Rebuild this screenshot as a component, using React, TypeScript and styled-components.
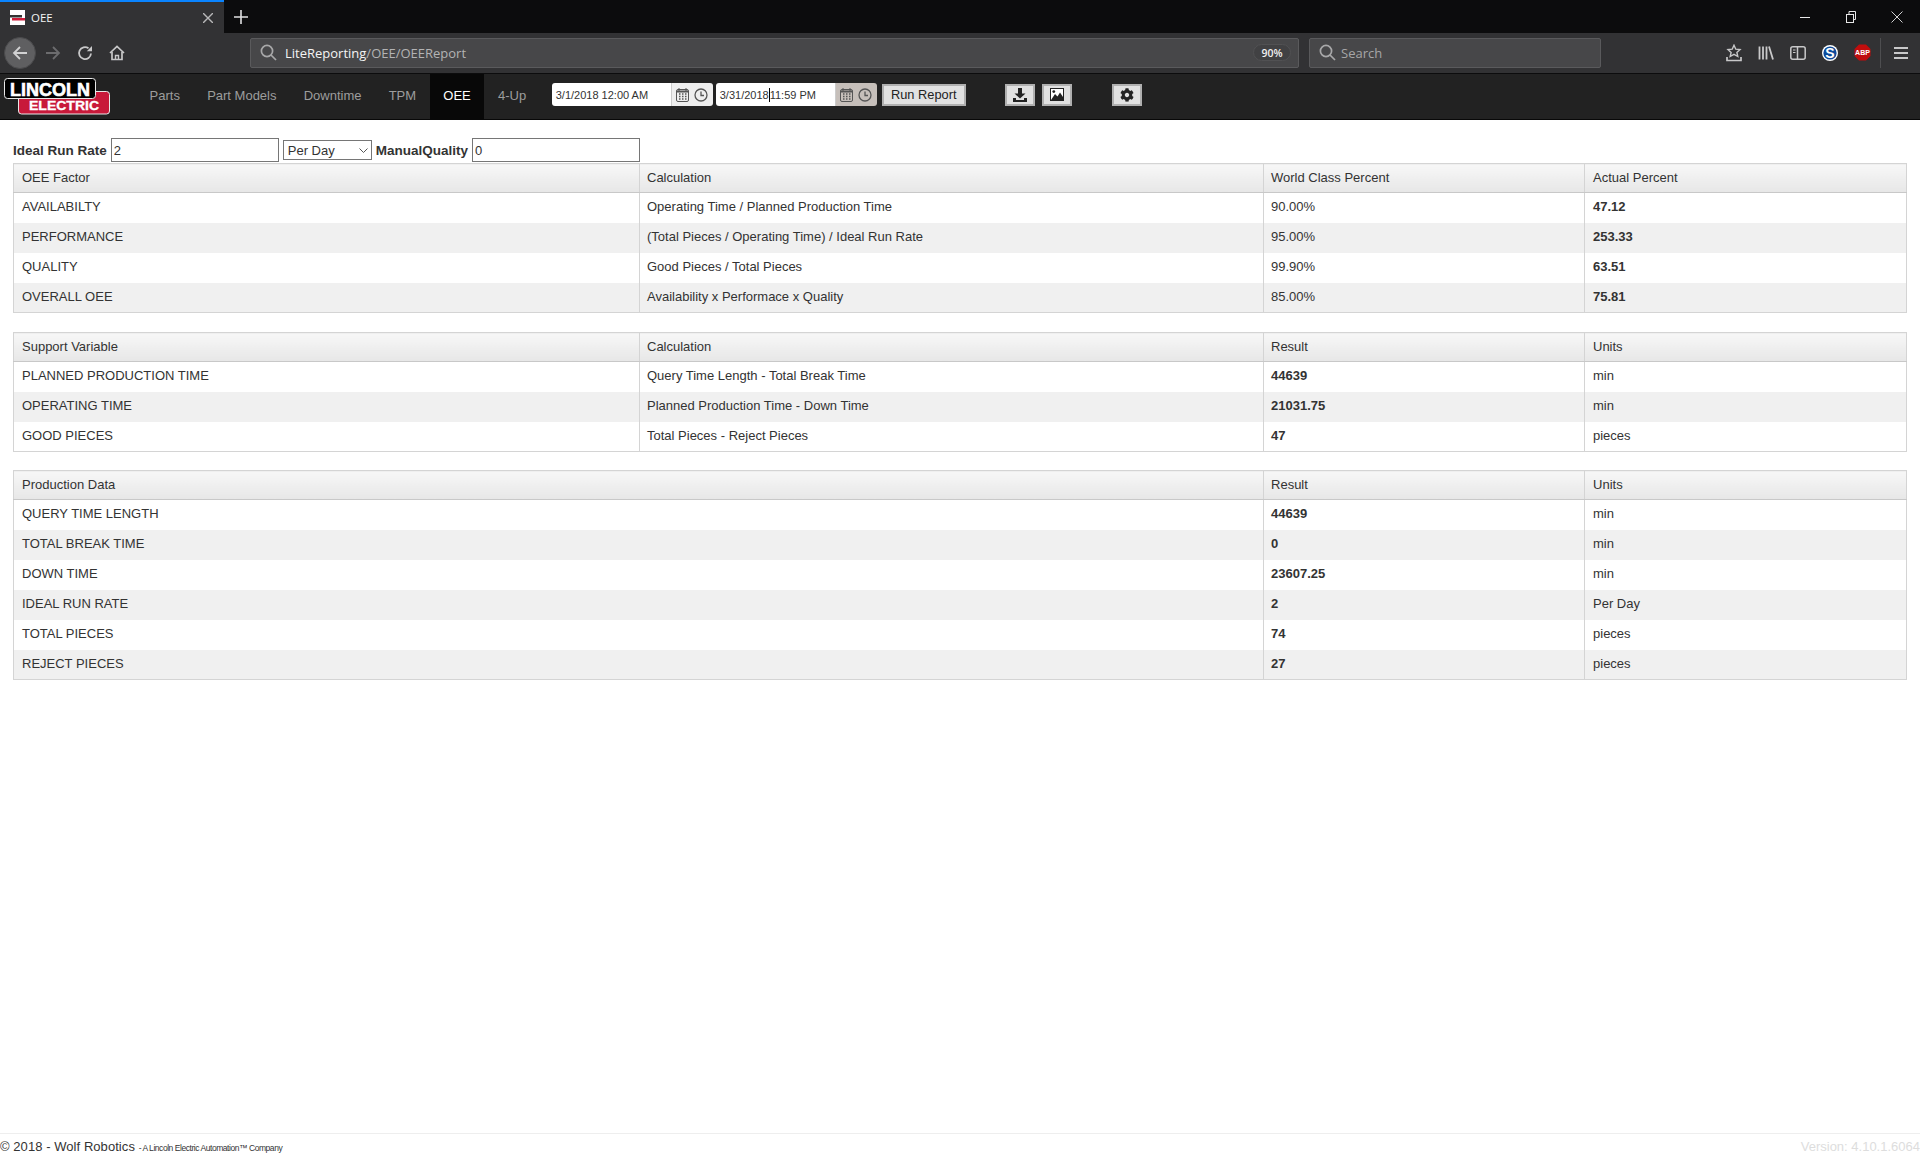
import React from "react";
import styled, { createGlobalStyle } from "styled-components";
import { FaCog } from "react-icons/fa";

const GlobalStyle = createGlobalStyle`
  html, body {
    margin: 0;
    padding: 0;
    background: #fff;
  }
  * {
    box-sizing: border-box;
  }
`;

interface Cell {
  text: string;
  bold?: boolean;
  span?: number;
}

const TABLE_COLS = [626, 624, 321, 322];

const factorRows: Cell[][] = [
  [{ text: "AVAILABILTY" }, { text: "Operating Time / Planned Production Time" }, { text: "90.00%" }, { text: "47.12", bold: true }],
  [{ text: "PERFORMANCE" }, { text: "(Total Pieces / Operating Time) / Ideal Run Rate" }, { text: "95.00%" }, { text: "253.33", bold: true }],
  [{ text: "QUALITY" }, { text: "Good Pieces / Total Pieces" }, { text: "99.90%" }, { text: "63.51", bold: true }],
  [{ text: "OVERALL OEE" }, { text: "Availability x Performace x Quality" }, { text: "85.00%" }, { text: "75.81", bold: true }],
];

const supportRows: Cell[][] = [
  [{ text: "PLANNED PRODUCTION TIME" }, { text: "Query Time Length - Total Break Time" }, { text: "44639", bold: true }, { text: "min" }],
  [{ text: "OPERATING TIME" }, { text: "Planned Production Time - Down Time" }, { text: "21031.75", bold: true }, { text: "min" }],
  [{ text: "GOOD PIECES" }, { text: "Total Pieces - Reject Pieces" }, { text: "47", bold: true }, { text: "pieces" }],
];

const productionRows: Cell[][] = [
  [{ text: "QUERY TIME LENGTH", span: 2 }, { text: "44639", bold: true }, { text: "min" }],
  [{ text: "TOTAL BREAK TIME", span: 2 }, { text: "0", bold: true }, { text: "min" }],
  [{ text: "DOWN TIME", span: 2 }, { text: "23607.25", bold: true }, { text: "min" }],
  [{ text: "IDEAL RUN RATE", span: 2 }, { text: "2", bold: true }, { text: "Per Day" }],
  [{ text: "TOTAL PIECES", span: 2 }, { text: "74", bold: true }, { text: "pieces" }],
  [{ text: "REJECT PIECES", span: 2 }, { text: "27", bold: true }, { text: "pieces" }],
];

const navItems = ["Parts", "Part Models", "Downtime", "TPM", "OEE", "4-Up"];

const ReportTable = ({ head, rows }: { head: Cell[]; rows: Cell[][] }) => (
  <Table>
    <colgroup>
      {TABLE_COLS.map((w, i) => (
        <Col key={i} $w={w} />
      ))}
    </colgroup>
    <thead>
      <tr>
        {head.map((h) => (
          <Th key={h.text} colSpan={h.span}>
            {h.text}
          </Th>
        ))}
      </tr>
    </thead>
    <tbody>
      {rows.map((row, i) => (
        <Tr key={i}>
          {row.map((c) => (
            <Td key={c.text} colSpan={c.span} $bold={c.bold}>
              {c.text}
            </Td>
          ))}
        </Tr>
      ))}
    </tbody>
  </Table>
);

const CalendarIcon = () => (
  <svg width="13" height="14" viewBox="0 0 13 14" fill="none" stroke="#555" strokeWidth="1">
    <rect x="0.5" y="1.5" width="12" height="12" rx="1.5" />
    <path d="M3 0v3M10 0v3" />
    <path d="M1 3.5h11" strokeWidth="2" />
    <path d="M3 6h1.5M6 6h1.5M9 6h1.5M3 8.5h1.5M6 8.5h1.5M9 8.5h1.5M3 11h1.5M6 11h1.5M9 11h1.5" strokeWidth="1.4" />
  </svg>
);

const ClockIcon = () => (
  <svg width="14" height="14" viewBox="0 0 14 14" fill="none" stroke="#555" strokeWidth="1.3">
    <circle cx="7" cy="7" r="6" />
    <path d="M7 3.5V7.5H10" />
  </svg>
);

const SearchGlyph = () => (
  <svg width="17" height="17" viewBox="0 0 17 17" fill="none" stroke="#a8a8a9" strokeWidth="1.7" style={{ flexShrink: 0 }}>
    <circle cx="7" cy="7" r="5.6" />
    <path d="M11 11L16 16" />
  </svg>
);

const App = () => {
  return (
    <Page>
      <GlobalStyle />

      <TabStrip>
        <ActiveTab>
          <Favicon>
            <svg width="15" height="15" viewBox="0 0 15 15">
              <rect width="15" height="15" fill="#fff" />
              <rect x="0" y="5" width="12" height="2.5" fill="#333" />
              <rect x="2" y="8" width="13" height="2.5" fill="#d01c3a" />
            </svg>
          </Favicon>
          <TabTitle>OEE</TabTitle>
          <TabClose>
            <svg width="10" height="10" viewBox="0 0 10 10" stroke="#b8b8b9" strokeWidth="1.4">
              <path d="M0 0L10 10M10 0L0 10" />
            </svg>
          </TabClose>
        </ActiveTab>
        <NewTab>
          <svg width="14" height="14" viewBox="0 0 14 14" stroke="#e0e0e1" strokeWidth="1.6">
            <path d="M7 0V14M0 7H14" />
          </svg>
        </NewTab>
        <WindowControls>
          <WindowButton>
            <svg width="10" height="10" viewBox="0 0 10 10" stroke="#e8e8e8">
              <path d="M0 5.5H10" />
            </svg>
          </WindowButton>
          <WindowButton>
            <svg width="10" height="12" viewBox="0 0 10 12" fill="none" stroke="#e8e8e8">
              <rect x="0.5" y="3.5" width="7" height="8" />
              <path d="M3 3.5V0.5H9.5V8.5H7.5" />
            </svg>
          </WindowButton>
          <WindowButton>
            <svg width="12" height="12" viewBox="0 0 12 12" stroke="#e8e8e8" strokeWidth="0.9">
              <path d="M0.5 0.5L11.5 11.5M11.5 0.5L0.5 11.5" />
            </svg>
          </WindowButton>
        </WindowControls>
      </TabStrip>

      <BrowserBar>
        <BackButton>
          <svg width="16" height="16" viewBox="0 0 16 16" fill="none" stroke="#d2d2d3" strokeWidth="1.8">
            <path d="M15 8H2M8 2L2 8L8 14" />
          </svg>
        </BackButton>
        <BarButton>
          <svg width="16" height="16" viewBox="0 0 16 16" fill="none" stroke="#6c6c6e" strokeWidth="1.8">
            <path d="M1 8H14M8 2L14 8L8 14" />
          </svg>
        </BarButton>
        <BarButton>
          <svg width="16" height="16" viewBox="0 0 16 16" fill="none" stroke="#c8c8c9" strokeWidth="1.8">
            <path d="M14 8.5A6 6 0 1 1 11.5 3.2" />
            <path d="M15 1V6.2H9.8Z" fill="#c8c8c9" stroke="none" />
          </svg>
        </BarButton>
        <BarButton>
          <svg width="16" height="16" viewBox="0 0 16 16" fill="none" stroke="#c8c8c9" strokeWidth="1.7">
            <path d="M1 8L8 1.5L15 8" />
            <path d="M3 7V14.5H13V7" />
            <path d="M6.5 14.5V10.5H9.5V14.5" strokeWidth="1.4" />
          </svg>
        </BarButton>

        <UrlBar>
          <SearchGlyph />
          <UrlText>
            <UrlHost>LiteReporting</UrlHost>/OEE/OEEReport
          </UrlText>
          <ZoomPill>90%</ZoomPill>
        </UrlBar>

        <SearchBar>
          <SearchGlyph />
          <SearchText>Search</SearchText>
        </SearchBar>

        <BarIcons>
          <BarIconSlot>
            <svg width="16" height="18" viewBox="0 0 16 18" fill="none" stroke="#c8c8c9" strokeWidth="1.4">
              <path d="M8 1.2L9.8 5.2L14 5.6L10.9 8.4L11.8 12.5L8 10.4L4.2 12.5L5.1 8.4L2 5.6L6.2 5.2Z" />
              <path d="M1 13V16.5H15V13" strokeWidth="1.7" />
            </svg>
          </BarIconSlot>
          <BarIconSlot>
            <svg width="16" height="16" viewBox="0 0 16 16" fill="none" stroke="#c8c8c9" strokeWidth="1.8">
              <path d="M1.5 1.5V14.5M5 1.5V14.5M8.5 1.5V14.5M11 1.5L15 14.5" />
            </svg>
          </BarIconSlot>
          <BarIconSlot>
            <svg width="16" height="14" viewBox="0 0 16 14" fill="none" stroke="#c8c8c9" strokeWidth="1.5">
              <rect x="0.8" y="0.8" width="14.4" height="12.4" rx="2" />
              <path d="M7.5 1V13" />
              <path d="M3 4H5.5M3 6.5H5.5" strokeWidth="1" />
            </svg>
          </BarIconSlot>
          <BarIconSlot>
            <svg width="16" height="16" viewBox="0 0 16 16">
              <circle cx="8" cy="8" r="8" fill="#fff" />
              <circle cx="8" cy="8" r="6.6" fill="#0c4a9b" />
              <SyncLetter x="8" y="12.8">S</SyncLetter>
            </svg>
          </BarIconSlot>
          <BarIconSlot>
            <svg width="17" height="17" viewBox="0 0 17 17">
              <path d="M5 0.5H12L16.5 5V12L12 16.5H5L0.5 12V5Z" fill="#c00d0d" />
              <AbpLetters x="8.5" y="11.2">ABP</AbpLetters>
            </svg>
          </BarIconSlot>
        </BarIcons>
        <BarDivider />
        <MenuButton>
          <svg width="14" height="12" viewBox="0 0 14 12" stroke="#c8c8c9" strokeWidth="2">
            <path d="M0 1H14M0 6H14M0 11H14" />
          </svg>
        </MenuButton>
      </BrowserBar>

      <Navbar>
        <Logo>
          <svg width="106" height="37" viewBox="0 0 106 37">
            <rect x="14.5" y="13.5" width="91" height="22.5" rx="3" fill="#c8193a" stroke="#e8e8e8" />
            <rect x="0.5" y="0.5" width="91" height="20" rx="3" fill="#000" stroke="#e8e8e8" />
            <LogoWord x="6" y="17.5" fontSize="18" textLength="80" lengthAdjust="spacingAndGlyphs" $stroke={0.6}>
              LINCOLN
            </LogoWord>
            <LogoWord x="25" y="32" fontSize="12.5" textLength="70" lengthAdjust="spacingAndGlyphs" $stroke={0.3}>
              ELECTRIC
            </LogoWord>
          </svg>
        </Logo>

        <NavList>
          {navItems.map((item) => (
            <NavItem key={item} $active={item === "OEE"}>
              {item}
            </NavItem>
          ))}
        </NavList>

        <DateGroup>
          <DateBox>
            <DateField>3/1/2018 12:00 AM</DateField>
            <DateAddon>
              <CalendarIcon />
              <ClockIcon />
            </DateAddon>
          </DateBox>
          <DateBox>
            <DateField>
              3/31/2018
              <Caret />
              {" "}11:59 PM
            </DateField>
            <DateAddon $focused>
              <CalendarIcon />
              <ClockIcon />
            </DateAddon>
          </DateBox>
        </DateGroup>

        <RunButton>Run Report</RunButton>

        <IconButton $left={39}>
          <svg width="14" height="14" viewBox="0 0 14 14" fill="#222">
            <path d="M5 0H9V5.5H12.5L7 10.5L1.5 5.5H5Z" />
            <path d="M0 10H3V12H11V10H14V14H0Z" />
          </svg>
        </IconButton>
        <IconButton $left={7}>
          <svg width="14" height="13" viewBox="0 0 14 13">
            <rect x="0.5" y="0.5" width="13" height="12" fill="#fff" stroke="#222" />
            <path d="M1 12L5 6L7.5 8.5L10 4.5L13 9V12Z" fill="#222" />
            <circle cx="3.8" cy="3.6" r="1.4" fill="#222" />
          </svg>
        </IconButton>
        <IconButton $left={40}>
          <FaCog size={14} color="#222" />
        </IconButton>
      </Navbar>

      <Main>
        <ParamRow>
          <ParamLabel>Ideal Run Rate</ParamLabel>
          <ParamInput defaultValue="2" />
          <SelectWrap>
            <ParamSelect defaultValue="Per Day">
              <option>Per Day</option>
              <option>Per Hour</option>
            </ParamSelect>
            <SelectArrow width="9" height="5" viewBox="0 0 9 5" fill="none" stroke="#555">
              <path d="M0.5 0.5L4.5 4.5L8.5 0.5" />
            </SelectArrow>
          </SelectWrap>
          <ParamLabel>ManualQuality</ParamLabel>
          <ParamInput defaultValue="0" />
        </ParamRow>

        <ReportTable
          head={[{ text: "OEE Factor" }, { text: "Calculation" }, { text: "World Class Percent" }, { text: "Actual Percent" }]}
          rows={factorRows}
        />
        <ReportTable
          head={[{ text: "Support Variable" }, { text: "Calculation" }, { text: "Result" }, { text: "Units" }]}
          rows={supportRows}
        />
        <ReportTable
          head={[{ text: "Production Data", span: 2 }, { text: "Result" }, { text: "Units" }]}
          rows={productionRows}
        />
      </Main>

      <Footer>
        <Copyright>
          © 2018 - Wolf Robotics <CopySmall>- A Lincoln Electric Automation™ Company</CopySmall>
        </Copyright>
        <Version>Version: 4.10.1.6064</Version>
      </Footer>
    </Page>
  );
};

const Page = styled.div`
  display: flex;
  flex-direction: column;
  height: 100vh;
  font-family: "Liberation Sans", Arial, sans-serif;
  color: #333;
`;

const TabStrip = styled.div`
  display: flex;
  align-items: stretch;
  height: 33px;
  background: #0c0c0d;
  flex-shrink: 0;
`;

const ActiveTab = styled.div`
  display: flex;
  align-items: center;
  width: 224px;
  padding: 0 11px 0 10px;
  background: #323234;
  border-top: 2px solid #0a84ff;
`;

const Favicon = styled.div`
  display: flex;
  width: 15px;
  height: 15px;
`;

const TabTitle = styled.span`
  margin-left: 6px;
  font-family: "Open Sans", sans-serif;
  font-size: 11.5px;
  color: #f5f5f5;
`;

const TabClose = styled.span`
  display: flex;
  margin-left: auto;
`;

const NewTab = styled.div`
  display: flex;
  align-items: center;
  justify-content: center;
  width: 34px;
`;

const WindowControls = styled.div`
  display: flex;
  margin-left: auto;
`;

const WindowButton = styled.div`
  display: flex;
  align-items: center;
  justify-content: center;
  width: 46px;
`;

const BrowserBar = styled.div`
  display: flex;
  align-items: center;
  height: 41px;
  padding-left: 4px;
  padding-bottom: 1px;
  background: #323234;
  border-bottom: 1px solid #0c0c0d;
  flex-shrink: 0;
`;

const BackButton = styled.div`
  display: flex;
  align-items: center;
  justify-content: center;
  width: 32px;
  height: 32px;
  margin-right: 1px;
  border-radius: 50%;
  background: #5f5f61;
  border: 1px solid #4a4a4c;
`;

const BarButton = styled.div`
  display: flex;
  align-items: center;
  justify-content: center;
  width: 32px;
  height: 32px;
`;

const UrlBar = styled.div`
  display: flex;
  align-items: center;
  width: 1049px;
  height: 30px;
  margin-left: 117px;
  padding: 0 7px 0 9px;
  background: #474749;
  border: 1px solid #5a5a5c;
  border-radius: 2px;
`;

const SearchBar = styled(UrlBar)`
  width: 292px;
  margin-left: 10px;
`;

const UrlText = styled.span`
  margin-left: 8px;
  padding-top: 1px;
  font-family: "Open Sans", sans-serif;
  font-size: 13px;
  color: #b3b3b4;
`;

const UrlHost = styled.span`
  color: #f4f4f4;
`;

const ZoomPill = styled.span`
  display: flex;
  align-items: center;
  justify-content: center;
  width: 38px;
  height: 17px;
  margin-left: auto;
  border-radius: 9px;
  background: #414143;
  border: 1px solid #515153;
  font-family: "Open Sans", sans-serif;
  font-size: 10.5px;
  font-weight: 600;
  color: #f0f0f0;
`;

const SearchText = styled.span`
  margin-left: 5px;
  padding-top: 1px;
  font-family: "Open Sans", sans-serif;
  font-size: 13px;
  color: #a6a6a7;
`;

const BarIcons = styled.div`
  display: flex;
  margin-left: 117px;
`;

const BarIconSlot = styled.div`
  display: flex;
  align-items: center;
  justify-content: center;
  width: 32px;
  height: 32px;
`;

const SyncLetter = styled.text`
  font-family: "Liberation Sans", sans-serif;
  font-size: 14px;
  font-weight: 700;
  fill: #fff;
  text-anchor: middle;
`;

const AbpLetters = styled.text`
  font-family: "Liberation Sans", sans-serif;
  font-size: 7px;
  font-weight: 700;
  fill: #fff;
  text-anchor: middle;
`;

const BarDivider = styled.div`
  width: 1px;
  height: 30px;
  margin-left: 2px;
  background: #4e4e50;
`;

const MenuButton = styled.div`
  display: flex;
  align-items: center;
  justify-content: center;
  flex: 1;
`;

const Navbar = styled.nav`
  display: flex;
  align-items: center;
  height: 46px;
  padding: 0 0 4px 4px;
  background: #222;
  border-bottom: 1px solid #080808;
  flex-shrink: 0;
`;

const Logo = styled.div`
  display: flex;
  width: 132px;
  height: 37px;
  margin-top: 4px;
`;

const LogoWord = styled.text<{ $stroke: number }>`
  font-family: "Liberation Sans", sans-serif;
  font-weight: 700;
  fill: #fff;
  stroke: #fff;
  stroke-width: ${(p) => p.$stroke};
`;

const NavList = styled.div`
  display: flex;
  align-self: stretch;
  margin-bottom: -4px;
`;

const NavItem = styled.a<{ $active?: boolean }>`
  display: flex;
  align-items: center;
  padding: 0 13.6px 2px;
  font-size: 13px;
  color: ${(p) => (p.$active ? "#fff" : "#9d9d9d")};
  background: ${(p) => (p.$active ? "#080808" : "transparent")};
`;

const DateGroup = styled.div`
  display: flex;
  gap: 3px;
  margin-left: 12px;
`;

const DateBox = styled.div`
  display: flex;
  width: 161px;
  height: 23px;
  border-radius: 3px;
  overflow: hidden;
`;

const DateField = styled.div`
  display: flex;
  align-items: center;
  width: 119px;
  padding-left: 4px;
  background: #fff;
  font-size: 11px;
  color: #333;
  white-space: pre;
`;

const Caret = styled.span`
  display: inline-block;
  width: 1px;
  height: 14px;
  background: #000;
`;

const DateAddon = styled.div<{ $focused?: boolean }>`
  display: flex;
  align-items: center;
  justify-content: center;
  flex: 1;
  gap: 5px;
  background: ${(p) => (p.$focused ? "#c6bfba" : "#eee")};
  border-left: 1px solid #ccc;
`;

const GrayButton = styled.button`
  display: flex;
  align-items: center;
  justify-content: center;
  height: 22px;
  padding: 0;
  background: #e1e1e1;
  border: 2px solid #b0b0b0;
  border-radius: 0;
  color: #222;
`;

const RunButton = styled(GrayButton)`
  width: 84px;
  margin-left: 5px;
  font-family: "Liberation Sans", sans-serif;
  font-size: 12.8px;
`;

const IconButton = styled(GrayButton)<{ $left: number }>`
  width: 30px;
  margin-left: ${(p) => p.$left}px;
`;

const Main = styled.main`
  display: flex;
  flex-direction: column;
  padding: 17px 13px 0;
`;

const ParamRow = styled.div`
  display: flex;
  align-items: center;
  gap: 4px;
  height: 26px;
`;

const ParamLabel = styled.label`
  font-size: 13.5px;
  font-weight: 700;
`;

const ParamInput = styled.input`
  width: 168px;
  height: 24px;
  padding: 0 2px;
  border: 1px solid #767676;
  font-family: "Liberation Sans", sans-serif;
  font-size: 13px;
  color: #333;
`;

const SelectWrap = styled.div`
  position: relative;
  display: flex;
`;

const ParamSelect = styled.select`
  width: 89px;
  height: 20px;
  padding: 0 0 0 4px;
  appearance: none;
  border: 1px solid #767676;
  border-radius: 0;
  background: #fff;
  font-family: "Liberation Sans", sans-serif;
  font-size: 13px;
  color: #333;
`;

const SelectArrow = styled.svg`
  position: absolute;
  top: 8px;
  right: 4px;
  pointer-events: none;
`;

const Table = styled.table`
  width: 1893px;
  margin-bottom: 18px;
  table-layout: fixed;
  border-collapse: collapse;
  border: 1px solid #d4d4d4;
  font-size: 13px;
  &:first-of-type {
    margin-bottom: 19px;
  }
`;

const Col = styled.col<{ $w: number }>`
  width: ${(p) => p.$w}px;
`;

const Th = styled.th`
  height: 29px;
  padding: 0 7px 2px;
  text-align: left;
  font-weight: 400;
  background: linear-gradient(#f7f7f7, #e7e7e7);
  border-left: 1px solid #d4d4d4;
  border-bottom: 1px solid #c8c8c8;
  &:first-child,
  &:last-child {
    padding-left: 8px;
  }
`;

const Tr = styled.tr`
  &:nth-child(even) {
    background: #f0f0f0;
  }
`;

const Td = styled.td<{ $bold?: boolean }>`
  height: 30px;
  padding: 0 7px 2px;
  font-weight: ${(p) => (p.$bold ? 700 : 400)};
  border-left: 1px solid #d4d4d4;
  &:first-child,
  &:last-child {
    padding-left: 8px;
  }
`;

const Footer = styled.footer`
  display: flex;
  align-items: center;
  justify-content: space-between;
  height: 27px;
  padding-bottom: 1px;
  margin-top: auto;
  border-top: 1px solid #eee;
  flex-shrink: 0;
`;

const Copyright = styled.span`
  font-size: 13px;
  letter-spacing: 0.06px;
`;

const CopySmall = styled.small`
  font-size: 8.5px;
  letter-spacing: -0.45px;
`;

const Version = styled.span`
  font-size: 13px;
  color: #ddd;
`;

export default App;
